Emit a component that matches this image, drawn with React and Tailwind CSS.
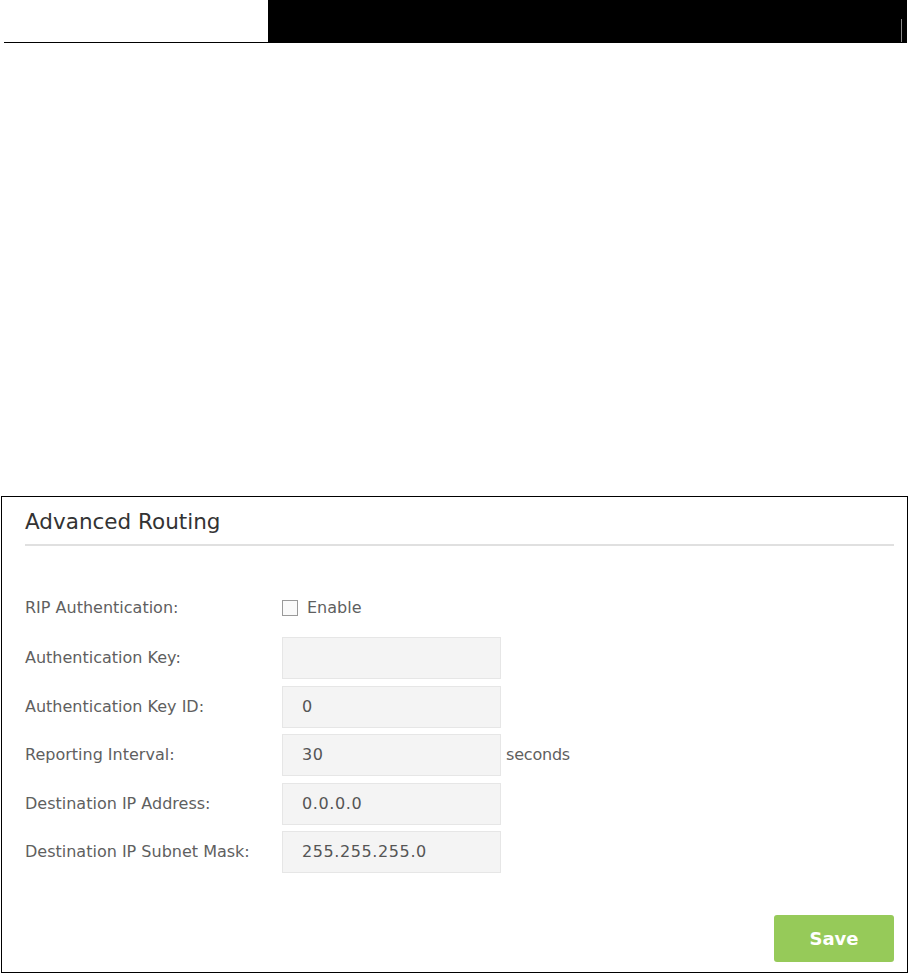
import React from "react";

const font = { fontFamily: '"DejaVu Sans", "Liberation Sans", sans-serif' };

function Row({ label, children, className = "" }) {
  return (
    <div className={"flex items-center " + className}>
      <div className="w-[257px] shrink-0 text-[16px] text-[#5f5f5f]">{label}</div>
      {children}
    </div>
  );
}

function Field({ value }) {
  return (
    <div className="w-[219px] h-[42px] shrink-0 bg-[#f4f4f4] border border-[#e6e6e6] px-[19px] flex items-center text-[16px] tracking-[0.6px] text-[#555]">
      {value}
    </div>
  );
}

export default function App() {
  return (
    <div className="w-[909px] h-[974px] bg-white" style={font}>
      <div className="flex h-[43px]">
        <div className="ml-[4px] w-[264px] h-[43px] border-b border-black" />
        <div className="w-[639px] h-[43px] bg-black border-b border-black flex justify-end items-end pr-[5px]">
          <div className="w-px h-[23px] bg-[#888]" />
        </div>
      </div>

      <div className="mt-[453px] ml-px w-[907px] h-[477px] border border-black flex flex-col pl-[23px] pr-[13px]">
        <div className="pt-[12px] pb-[9px] leading-[26px] text-[21.5px] text-[#333] border-b-2 border-[#e0e0e0]">
          Advanced Routing
        </div>

        <div className="mt-[41px] flex flex-col">
          <Row label="RIP Authentication:" className="h-[42px] mb-[8px]">
            <div className="w-[16px] h-[16px] border border-[#9a9a9a] bg-[#fafafa]" />
            <span className="ml-[9px] text-[16px] text-[#5f5f5f]">Enable</span>
          </Row>
          <div className="flex flex-col gap-[6.5px]">
            <Row label="Authentication Key:">
              <Field value="" />
            </Row>
            <Row label="Authentication Key ID:">
              <Field value="0" />
            </Row>
            <Row label="Reporting Interval:">
              <Field value="30" />
              <span className="ml-[5px] text-[16px] tracking-[-0.2px] text-[#5f5f5f]">seconds</span>
            </Row>
            <Row label="Destination IP Address:">
              <Field value="0.0.0.0" />
            </Row>
            <Row label="Destination IP Subnet Mask:">
              <Field value="255.255.255.0" />
            </Row>
          </div>
        </div>

        <div className="mt-auto pb-[10px] flex justify-end">
          <div className="w-[120px] h-[47px] rounded-[3px] bg-[#96ca59] flex items-center justify-center text-white text-[18px] font-bold">
            Save
          </div>
        </div>
      </div>
    </div>
  );
}
